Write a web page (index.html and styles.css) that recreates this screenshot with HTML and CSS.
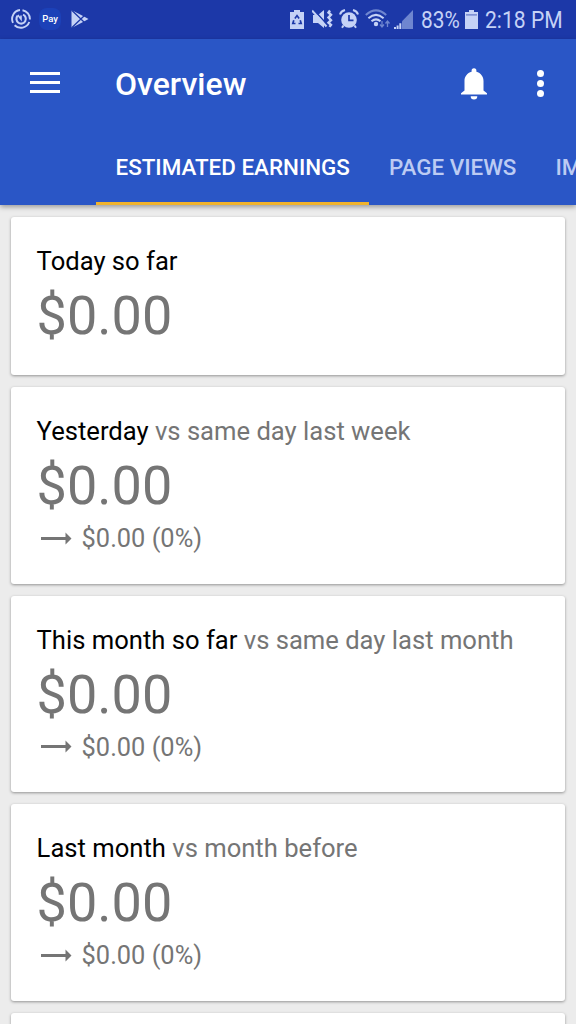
FILE: index.html
```html
<!DOCTYPE html>
<html lang="en">
<head>
  <meta charset="UTF-8" />
  <title>Overview</title>
  <meta name="viewport" content="width=device-width, initial-scale=1.0" />
  <link rel="stylesheet" href="styles.css">
</head>
<body>

<!-- Status bar -->
<div class="status-bar">
  <div class="status-left">
    <svg width="20" height="20" viewBox="0 0 20 20" fill="none" stroke="#c5d2f6">
      <path d="M11.5 1.2A9 9 0 0 1 18.9 10.5M18.3 13A9 9 0 0 1 3.6 16.2M2 13.8A9 9 0 0 1 9 1" stroke-width="1.9" />
      <path d="M12 5.6A4.7 4.7 0 1 1 6.6 6.8" stroke-width="2.1" />
      <path d="M6.8 6L10 10.2V6.5" stroke-width="1.6" />
    </svg>
    <span class="pay">Pay</span>
    <svg width="18" height="20" viewBox="0 0 18 20">
      <path d="M0.5 1L12.5 7.2L17.5 10L12.5 12.8L0.5 19Z" fill="#c5d2f6" />
      <path d="M0.5 1L13.5 13.5M0.5 19L13.5 6.5" stroke="#1c38a8" stroke-width="1.3" />
    </svg>
  </div>
  <div class="status-right">
    <svg class="i-saver" width="14" height="19" viewBox="0 0 14 19">
      <path d="M4 0h6v2h4v17H0V2h4z" fill="#c5d2f6" />
      <path d="M4.9 8.4L7 5.6L9.1 8.4M10.2 10.2L11.2 13.5H8.5M5.5 13.5H2.8L3.8 10.2" fill="none" stroke="#1c38a8" stroke-width="1.7" />
    </svg>
    <svg class="i-mute" width="21" height="20" viewBox="0 0 21 20">
      <path d="M1 6h5l6-5v18l-6-5H1z" fill="#c5d2f6" />
      <path d="M1.5 .5L15 15.5" stroke="#1c38a8" stroke-width="1.6" />
      <path d="M0 1.5L14.5 17.5" stroke="#c5d2f6" stroke-width="2" />
      <path d="M18 1.5l-1.5 2 2.5 2.3-2.5 2.7 2.5 2.7-2.5 2.5 2.5 2.2-1.5 2" fill="none" stroke="#c5d2f6" stroke-width="2.4" />
    </svg>
    <svg class="i-alarm" width="20" height="20" viewBox="0 0 20 20">
      <circle cx="10" cy="11" r="7.8" fill="#c5d2f6" />
      <path d="M1 5.5Q2 2 6 1M19 5.5Q18 2 14 1M4.5 16.5L3 18.8M15.5 16.5L17 18.8" fill="none" stroke="#c5d2f6" stroke-width="2" />
      <path d="M10 6v5.3h4.5" fill="none" stroke="#1c38a8" stroke-width="1.7" />
    </svg>
    <svg class="i-wifi" width="26" height="20" viewBox="0 0 26 20" fill="none">
      <path d="M0.8 6Q11 -3.2 21.2 6" stroke="#6f86d0" stroke-width="2" />
      <path d="M3.4 9.2Q11 2.6 18.6 9.2M6.5 12.3Q11 8.4 15.5 12.3" stroke="#c5d2f6" stroke-width="2" />
      <circle cx="11" cy="15" r="2.2" fill="#c5d2f6" />
      <path d="M17 12v5.5M15 15.5l2 2.5 2-2.5M22.5 18v-5.5M20.5 14.5l2-2.5 2 2.5" stroke="#6f86d0" stroke-width="1.3" />
    </svg>
    <svg class="i-signal" width="19" height="19" viewBox="0 0 19 19">
      <path d="M8 19V11.2L19 0V19z" fill="#6f86d0" />
      <path d="M0 17h2v2H0zM2.6 15.5h2V19h-2zM5.3 13.2h2V19h-2z" fill="#c5d2f6" />
    </svg>
    <span class="percent">83%</span>
    <svg class="i-battery" width="13" height="19" viewBox="0 0 13 19">
      <path d="M4 0h5v2h4v17H0V2h4z" fill="#c5d2f6" />
      <path d="M1 4.9h11" stroke="#6076c6" stroke-width="1.2" />
    </svg>
    <span class="clock">2:18 PM</span>
  </div>
</div>

<!-- App bar -->
<div class="app-bar">
  <div class="toolbar">
    <div class="menu-btn"><span></span><span></span><span></span></div>
    <h1>Overview</h1>
    <svg class="bell" width="26" height="32" viewBox="0 0 26 32" fill="#fff">
      <path d="M13 0.2A2.4 2.4 0 0 0 10.6 2.7V3.8C6.2 5 3.5 8.7 3.5 13V22.5L0 25.2V26.6H26V25.2L22.5 22.5V13C22.5 8.7 19.8 5 15.4 3.8V2.7A2.4 2.4 0 0 0 13 .2z" />
      <path d="M9.7 28.3h6.6a3.3 3.2 0 0 1-6.6 0z" />
    </svg>
    <div class="more-btn"><span></span><span></span><span></span></div>
  </div>
  <div class="tabs">
    <div class="tab active">ESTIMATED EARNINGS</div>
    <div class="tab">PAGE VIEWS</div>
    <div class="tab">IMPRESSIONS</div>
  </div>
</div>

<!-- Cards -->
<div class="cards">
  <div class="card">
    <h2>Today so far</h2>
    <div class="amount">$0.00</div>
  </div>
  <div class="card">
    <h2>Yesterday <span>vs same day last week</span></h2>
    <div class="amount">$0.00</div>
    <div class="change">
      <svg width="31" height="13" viewBox="0 0 31 13"><path d="M0 5h24.5V.5L30.5 6.5L24.5 12.5V8H0z" /></svg>
      $0.00 (0%)
    </div>
  </div>
  <div class="card">
    <h2>This month so far <span>vs same day last month</span></h2>
    <div class="amount">$0.00</div>
    <div class="change">
      <svg width="31" height="13" viewBox="0 0 31 13"><path d="M0 5h24.5V.5L30.5 6.5L24.5 12.5V8H0z" /></svg>
      $0.00 (0%)
    </div>
  </div>
  <div class="card">
    <h2>Last month <span>vs month before</span></h2>
    <div class="amount">$0.00</div>
    <div class="change">
      <svg width="31" height="13" viewBox="0 0 31 13"><path d="M0 5h24.5V.5L30.5 6.5L24.5 12.5V8H0z" /></svg>
      $0.00 (0%)
    </div>
  </div>
  <div class="card"></div>
</div>

</body>
</html>
```
FILE: styles.css
```css
* { box-sizing:border-box; }
body { background:#ececec; color:#000; font-family:Roboto, sans-serif; margin:0; height:1024px; overflow:hidden; }
h1, h2 { margin:0; font-weight:400; }
svg { display:block; flex:none; }

.status-bar { background:#1c38a8; color:#c5d2f6; height:38.5px; display:flex; justify-content:space-between; padding:0 13px 0 11px; }
.status-left, .status-right { display:flex; align-items:center; white-space:nowrap; }
.status-left { gap:8px; }
.pay { width:22px; height:22px; margin-right:2px; border-radius:8px; background:#1c41b8; color:#fff; font-size:9.5px; font-weight:500; line-height:21px; text-align:center; }
.i-mute { margin-left:8px; }
.i-alarm { margin-left:6px; }
.i-wifi { margin-left:6px; }
.i-signal { margin-left:3px; }
.percent, .clock { font-size:24px; line-height:38px; padding-top:2px; transform-origin:left center; }
.percent { width:38px; margin-left:8px; transform:scaleX(.87); }
.i-battery { margin-left:6px; }
.clock { width:78px; margin-left:7px; transform:scaleX(.88); }

.app-bar { position:relative; background:#2a56c6; height:166px; display:flex; flex-direction:column; box-shadow:0 2px 5px rgba(0,0,0,.35); }
.toolbar { height:88px; display:flex; align-items:center; padding:0 32px 0 30px; color:#fff; }
.menu-btn { width:30px; height:21px; display:flex; flex-direction:column; justify-content:space-between; }
.menu-btn span { height:3px; background:#fff; }
.toolbar h1 { flex:1; margin-left:55px; padding-top:2px; font-size:32px; font-weight:500; line-height:40px; }
.bell { margin:2px 50px 0 0; }
.more-btn { display:flex; flex-direction:column; gap:3px; width:7px; margin-top:1px; }
.more-btn span { width:7px; height:7px; border-radius:50%; background:#fff; }
.tabs { flex:1; display:flex; padding-left:96px; overflow:hidden; }
.tab { flex:none; padding:2px 19.5px 0; font-size:22.4px; font-weight:500; line-height:76px; color:#bccbf3; }
.tab.active { color:#fff; border-bottom:3px solid #f0b32d; }

.cards { display:flex; flex-direction:column; gap:12px; padding:12.3px 11px 0; }
.card { flex:none; min-height:158.5px; background:#fff; border-radius:3px; padding:29px 25.6px 26.5px; box-shadow:0 1px 3px rgba(0,0,0,.38); }
.card h2 { font-size:25.6px; line-height:30px; white-space:nowrap; }
.card h2 span { color:#757575; }
.amount { margin-top:8px; font-size:54px; line-height:64px; color:#757575; }
.change { display:flex; align-items:center; gap:10px; margin-top:1px; padding-left:4px; font-size:25.4px; line-height:38px; color:#757575; }
.change svg { fill:#757575; }
```
